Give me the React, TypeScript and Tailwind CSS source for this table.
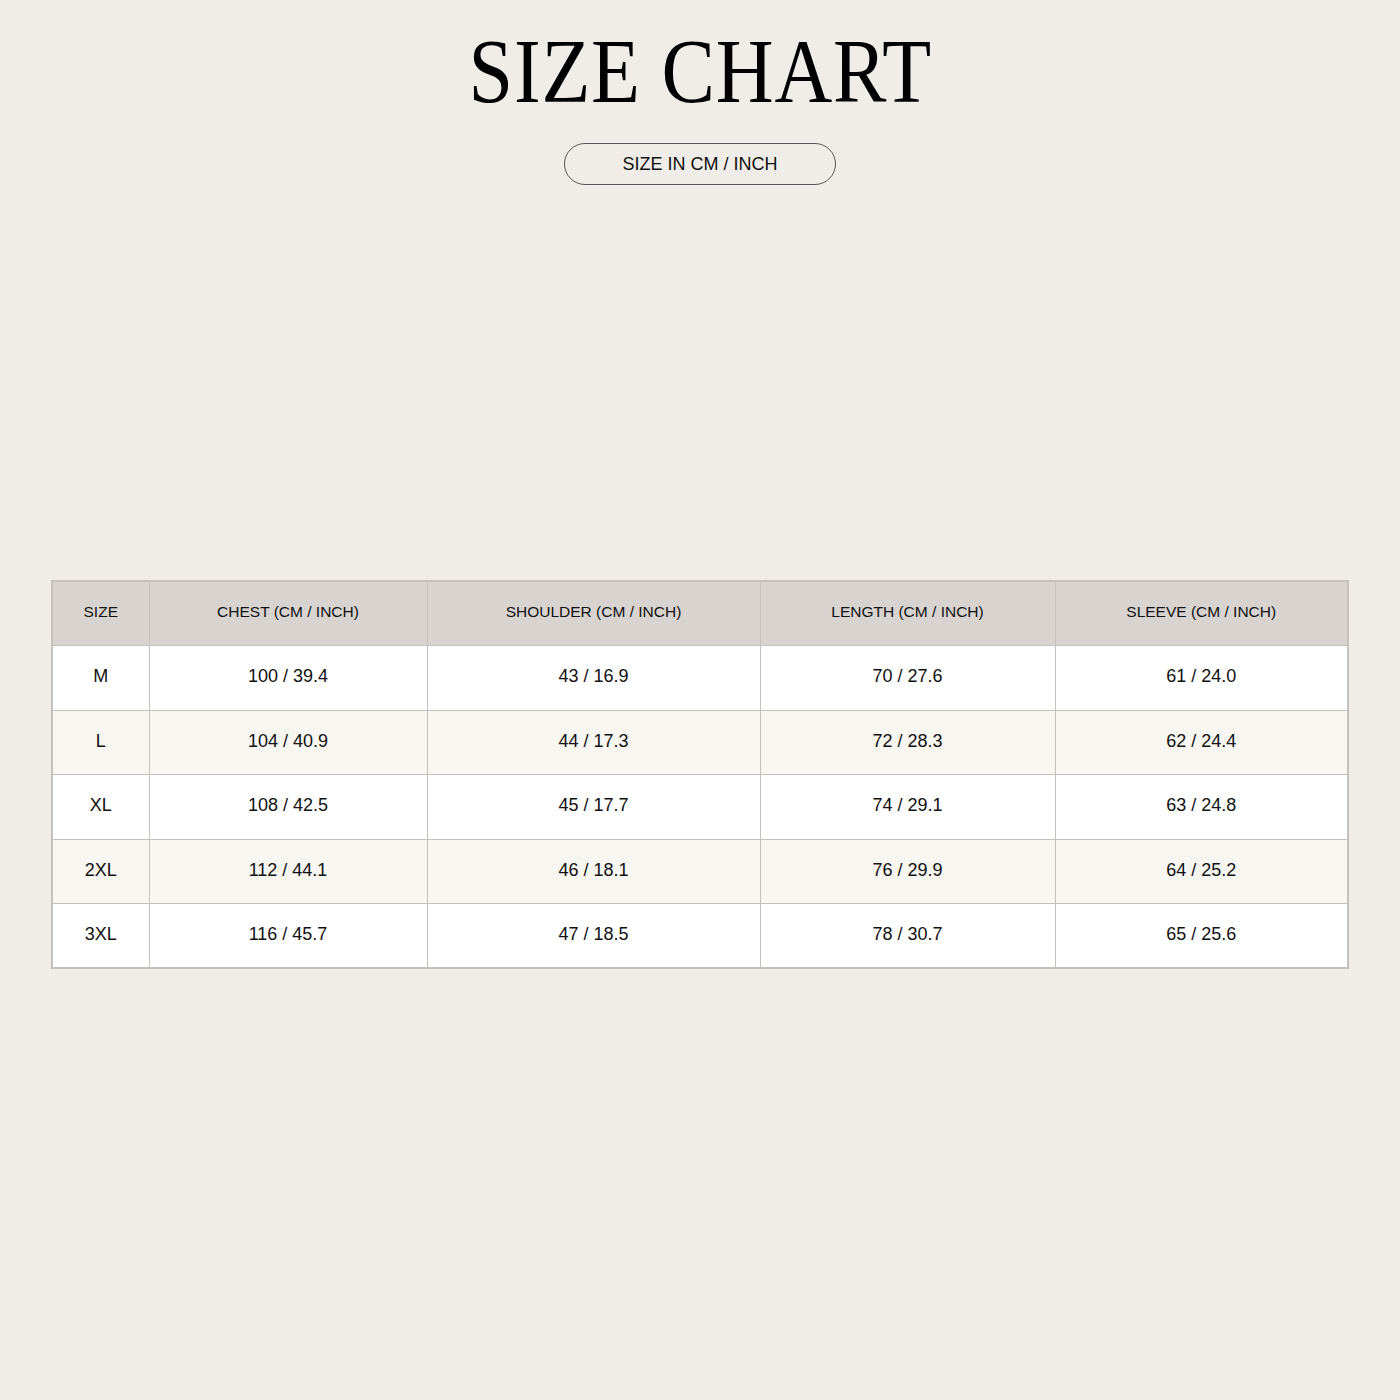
import React from 'react';

const headers = ['SIZE', 'CHEST (CM / INCH)', 'SHOULDER (CM / INCH)', 'LENGTH (CM / INCH)', 'SLEEVE (CM / INCH)'];

const rows = [
  ['M', '100 / 39.4', '43 / 16.9', '70 / 27.6', '61 / 24.0'],
  ['L', '104 / 40.9', '44 / 17.3', '72 / 28.3', '62 / 24.4'],
  ['XL', '108 / 42.5', '45 / 17.7', '74 / 29.1', '63 / 24.8'],
  ['2XL', '112 / 44.1', '46 / 18.1', '76 / 29.9', '64 / 25.2'],
  ['3XL', '116 / 45.7', '47 / 18.5', '78 / 30.7', '65 / 25.6'],
];

const colWidths = ['w-[97px]', 'w-[278px]', 'w-[333px]', 'w-[295px]', 'w-[293px]'];

const App: React.FC = () => {
  return (
    <div className="w-full min-h-[1400px] bg-[#f0ede8] flex flex-col items-center pt-[25px] font-['Liberation_Sans',Arial,sans-serif] text-[#111]">
      {/* Title */}
      <h1 className="font-['Liberation_Serif','Times_New_Roman',serif] text-[92px] leading-none tracking-[0.01em] scale-x-[0.87] text-black">
        SIZE CHART
      </h1>

      <div className="mt-[26px] w-[272px] h-[42px] rounded-full border border-[#555] flex items-center justify-center text-[18px]">
        SIZE IN CM / INCH
      </div>

      {/* Table */}
      <table className="mt-[395px] w-[1296px] border-collapse border-2 border-[#c4c0bb] table-fixed">
        <thead>
          <tr className="bg-[#d8d3cf] h-[64.5px]">
            {headers.map((h, i) => (
              <th key={h} className={`${colWidths[i]} border border-[#c4c0bb] text-[15.5px] font-normal text-center pb-[3px]`}>
                {h}
              </th>
            ))}
          </tr>
        </thead>
        <tbody>
          {rows.map((r, ri) => (
            <tr key={r[0]} className={`h-[64.5px] ${ri % 2 === 1 ? 'bg-[#f8f6f1]' : 'bg-white'}`}>
              {r.map((c, ci) => (
                <td key={ci} className="border border-[#c4c0bb] text-[18px] text-center pb-[2px]">
                  {c}
                </td>
              ))}
            </tr>
          ))}
        </tbody>
      </table>
    </div>
  );
};

export default App;
